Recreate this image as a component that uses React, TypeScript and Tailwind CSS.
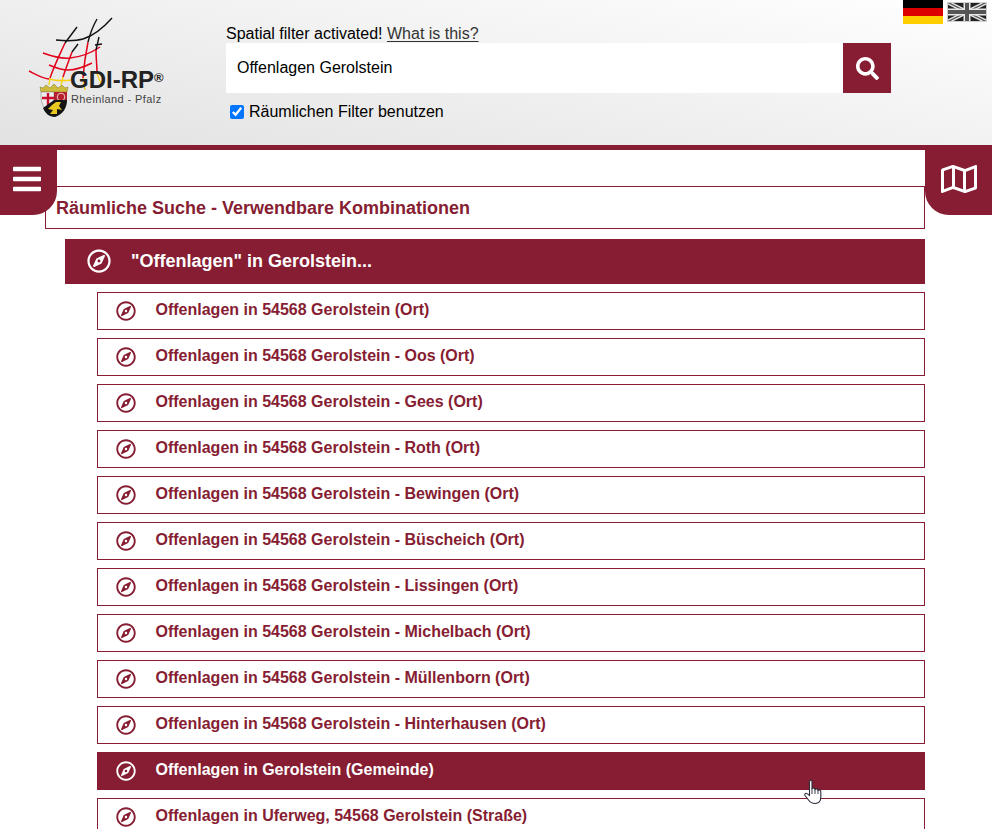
import React from "react";
import { FaBars, FaRegCompass, FaRegMap, FaSearch } from "react-icons/fa";

const places = [
  "Offenlagen in 54568 Gerolstein (Ort)",
  "Offenlagen in 54568 Gerolstein - Oos (Ort)",
  "Offenlagen in 54568 Gerolstein - Gees (Ort)",
  "Offenlagen in 54568 Gerolstein - Roth (Ort)",
  "Offenlagen in 54568 Gerolstein - Bewingen (Ort)",
  "Offenlagen in 54568 Gerolstein - Büscheich (Ort)",
  "Offenlagen in 54568 Gerolstein - Lissingen (Ort)",
  "Offenlagen in 54568 Gerolstein - Michelbach (Ort)",
  "Offenlagen in 54568 Gerolstein - Müllenborn (Ort)",
  "Offenlagen in 54568 Gerolstein - Hinterhausen (Ort)",
  "Offenlagen in Gerolstein (Gemeinde)",
  "Offenlagen in Uferweg, 54568 Gerolstein (Straße)",
];

function Logo() {
  return (
    <div className="relative w-[140px] h-[105px]">
      <svg width="140" height="105" viewBox="0 0 140 105" fill="none" className="absolute left-0 top-0">
        {/* yellow part */}
        <path d="M23 63 C30 65 38 65 46 64" stroke="#f7d117" strokeWidth="1.6" />
        <path d="M24 62 L23 69 M37 61 L35 69 M57 62 L59 74 M71 56 C72 62 74 66 77 70" stroke="#f7d117" strokeWidth="1.4" />
        {/* red part */}
        <path d="M17 37 C28 41 36 43 44 42 C55 41 65 37 74 31" stroke="#e2001a" strokeWidth="1.5" />
        <path d="M23 49 C30 52 36 54 42 54 C50 54 58 51 66 47" stroke="#e2001a" strokeWidth="1.5" />
        <path d="M3 55 C9 58 15 62 23 63" stroke="#e2001a" strokeWidth="1.5" />
        <path d="M39 27 C34 38 28 50 24 62" stroke="#e2001a" strokeWidth="1.5" />
        <path d="M46 36 C43 44 40 52 37 61" stroke="#e2001a" strokeWidth="1.5" />
        <path d="M62 26 C60 36 58 48 57 62" stroke="#e2001a" strokeWidth="1.5" />
        <path d="M70 34 C70 42 71 50 71 56" stroke="#e2001a" strokeWidth="1.5" />
        {/* black part of the net */}
        <path d="M30 24 C40 25 50 25 57 23 C67 20 78 11 86 2" stroke="#111" strokeWidth="1.4" />
        <path d="M51 11 L39 27" stroke="#111" strokeWidth="1.4" />
        <path d="M71 3 C67 10 64 18 62 26" stroke="#111" strokeWidth="1.4" />
        <path d="M52 28 L46 36" stroke="#111" strokeWidth="1.4" />
        <path d="M73 21 L70 34" stroke="#111" strokeWidth="1.4" />
        <path d="M69 29 L76 28" stroke="#111" strokeWidth="1.4" />
        {/* crest */}
        <path d="M14 71 L17 72 L20 69 L24 72 L28 68 L32 72 L36 69 L39 72 L42 71 L41 76 L15 76 Z" fill="#cdbb3c" stroke="#7d7622" strokeWidth="0.5" />
        <path d="M15 76 H28 V92 L21 96 C17 91 15 86 15 80 Z" fill="#ededed" stroke="#777" strokeWidth="0.5" />
        <path d="M22 77 V89 M16 82 H28" stroke="#c8102e" strokeWidth="2.4" />
        <path d="M28 76 H41 V84 L28 90 Z" fill="#b5202e" />
        <circle cx="35" cy="81" r="3.8" stroke="#e8c8c8" strokeWidth="1" />
        <path d="M17 92 L28 84 L41 84 C41 92 37 98 29 101 C23 101 19 97 17 92 Z" fill="#141414" />
        <path d="M22 93 L26 89 L30 86 L35 86 L33 90 L36 94 L31 93 L31 98 L24 98 L27 94 Z" fill="#e9c81f" />
      </svg>
      <div className="absolute left-[44px] top-[52px] flex items-start leading-none text-[#222] font-bold">
        <span className="text-[24px]">GDI-RP</span>
        <span className="text-[13px] mt-[3px]">®</span>
      </div>
      <div className="absolute left-[45px] top-[78px] text-[11px] leading-none text-[#444] tracking-[0.4px] whitespace-pre">
        Rheinland - Pfalz
      </div>
    </div>
  );
}

function GermanFlag() {
  return (
    <div className="w-10 h-6 flex flex-col">
      <div className="h-2 bg-black" />
      <div className="h-2 bg-[#dd0000]" />
      <div className="h-2 bg-[#ffce00]" />
    </div>
  );
}

function BritishFlag() {
  return (
    <svg width="40" height="20" viewBox="0 0 40 20" className="mt-[2px]">
      <rect width="40" height="20" fill="#222" />
      <path d="M0 0 L40 20 M40 0 L0 20" stroke="#e8e8e8" strokeWidth="4" />
      <path d="M0 0 L40 20 M40 0 L0 20" stroke="#555" strokeWidth="1.3" />
      <path d="M20 0 V20 M0 10 H40" stroke="#e8e8e8" strokeWidth="7" />
      <path d="M20 0 V20 M0 10 H40" stroke="#555" strokeWidth="4" />
      <rect x="0.5" y="0.5" width="39" height="19" fill="none" stroke="#cfcfcf" />
    </svg>
  );
}

function Cursor() {
  return (
    <svg width="21" height="26" viewBox="0 0 21 26" className="absolute left-[804px] top-[779px]">
      <path
        d="M5.5 2.5 C5.5 0.8 8 0.8 8 2.5 V9.5 C9 8.7 10.8 9 11 10.5 C11.8 9.5 13.8 9.7 14 11.3 C15 10.6 16.8 11 16.8 12.7 V18 C16.8 22 14.5 24.5 11 24.5 C7.5 24.5 6 23 4.5 21 L1 16.5 C0.2 15 1.8 13.8 3 14.6 L5.5 16.5 Z"
        fill="#fff"
        stroke="#2b2b3a"
        strokeWidth="1.1"
      />
      <path d="M8 9.5 V15 M11 10.5 V15 M14 11.3 V15" stroke="#2b2b3a" strokeWidth="0.9" />
    </svg>
  );
}

export default function App() {
  return (
    <div className="relative h-[829px] overflow-hidden bg-white font-['Liberation_Sans',Arial,sans-serif] text-black">
      {/* Header */}
      <header className="relative h-[150px] border-b-[5px] border-[#861d32] bg-[linear-gradient(190deg,#ffffff,#e2e2e2)] flex">
        <div className="w-[226px] pl-[26px] pt-[16px] shrink-0">
          <Logo />
        </div>
        <div className="w-[665px] pt-[24px]">
          <div className="text-base leading-[19px]">
            Spatial filter activated!{" "}
            <a className="text-[#333] underline underline-offset-2">What is this?</a>
          </div>
          <div className="flex h-[50px]">
            <div className="flex-1 bg-white pl-[11px] flex items-center text-base">Offenlagen Gerolstein</div>
            <button className="w-12 bg-[#861d32] flex items-center justify-center text-white">
              <FaSearch size={23} />
            </button>
          </div>
          <label className="flex items-center mt-[10px] ml-[4px] text-base leading-[18px]">
            <input type="checkbox" defaultChecked className="w-[14px] h-[14px] mr-[5px] accent-[#0075ff]" />
            Räumlichen Filter benutzen
          </label>
        </div>
        <div className="absolute right-[5px] top-0 flex gap-1">
          <GermanFlag />
          <BritishFlag />
        </div>
      </header>

      {/* Side buttons */}
      <button className="absolute left-0 top-[145px] w-[57px] h-[70px] bg-[#861d32] rounded-br-[24px] flex pl-[11px] pt-[18px] text-white">
        <FaBars size={32} />
      </button>
      <button className="absolute right-0 top-[145px] w-[67px] h-[70px] bg-[#861d32] rounded-bl-[24px] flex justify-center pt-[16px] text-white">
        <FaRegMap size={36} />
      </button>

      {/* Results */}
      <main className="pl-[45px] pr-[67px] pt-[36px]">
        <h2 className="h-[43px] border border-[#861d32] pl-[10px] flex items-center text-lg font-bold text-[#861d32]">
          Räumliche Suche - Verwendbare Kombinationen
        </h2>
        <div className="ml-5 mt-[10px] h-[45px] bg-[#861d32] flex items-center text-white">
          <FaRegCompass size={24} className="ml-[21.5px] -mt-[1px]" />
          <span className="ml-[20.5px] -mt-[2px] text-lg font-bold">"Offenlagen" in Gerolstein...</span>
        </div>
        <ul className="ml-[52px] mt-2 flex flex-col gap-2">
          {places.map((place, index) => (
            <li
              key={index}
              className={
                index === 10
                  ? "h-[38px] shrink-0 bg-[#861d32] text-white flex items-center text-base font-bold"
                  : "h-[38px] shrink-0 border border-[#861d32] text-[#861d32] flex items-center text-base font-bold"
              }
            >
              <FaRegCompass size={20} className={index === 10 ? "ml-[18.5px] -mt-[1px]" : "ml-[17.5px] -mt-[1px]"} />
              <span className="ml-5 -mt-[2px]">{place}</span>
            </li>
          ))}
        </ul>
      </main>
      <Cursor />
    </div>
  );
}
